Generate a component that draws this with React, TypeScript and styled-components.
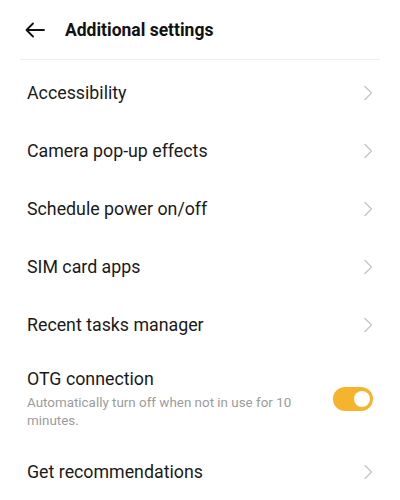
import styled, { createGlobalStyle } from "styled-components";

const GlobalStyle = createGlobalStyle`
    html, body {
        margin: 0;
        padding: 0;
        background: #ffffff;
        font-family: Roboto, "Noto Sans", Arial, sans-serif;
        -webkit-font-smoothing: antialiased;
    }
`;

type Item = { label: string };

const items: Item[] = [
    { label: "Accessibility" },
    { label: "Camera pop-up effects" },
    { label: "Schedule power on/off" },
    { label: "SIM card apps" },
    { label: "Recent tasks manager" },
];

const Chevron = () => (
    <ChevronIcon width="10" height="16" viewBox="0 0 10 16">
        <path d="M2 1.5 L8.5 8 L2 14.5" fill="none" stroke="#c6c6c6" strokeWidth="1.4" strokeLinecap="round" strokeLinejoin="round" />
    </ChevronIcon>
);

const App: React.FC = () => {
    return (
        <>
            <GlobalStyle />
            <Page>
                <Header>
                    <BackButton aria-label="Back">
                        <svg width="22" height="16" viewBox="0 0 22 16">
                            <path d="M20 8 H2.5 M9 1.5 L2.5 8 L9 14.5" fill="none" stroke="#111" strokeWidth="1.8" strokeLinecap="round" strokeLinejoin="round" />
                        </svg>
                    </BackButton>
                    <Title>Additional settings</Title>
                </Header>
                <Divider />
                <List>
                    {items.map((item) => (
                        <Row key={item.label}>
                            <RowLabel>{item.label}</RowLabel>
                            <Chevron />
                        </Row>
                    ))}
                    <SwitchRow>
                        <RowText>
                            <RowLabel>OTG connection</RowLabel>
                            <RowHint>Automatically turn off when not in use for 10 minutes.</RowHint>
                        </RowText>
                        <Toggle $on />
                    </SwitchRow>
                    <Row>
                        <RowLabel>Get recommendations</RowLabel>
                        <Chevron />
                    </Row>
                </List>
            </Page>
        </>
    );
};

export default App;

const Page = styled.div`
    width: 400px;
    height: 500px;
    overflow: hidden;
    background: #ffffff;
`;

const Header = styled.div`
    display: flex;
    align-items: center;
    height: 58px;
    padding: 0 0 0 24px;
    box-sizing: border-box;
    margin-top: 1px;
`;

const BackButton = styled.div`
    display: flex;
    align-items: center;
    width: 41px;
    svg {
        display: block;
    }
`;

const Title = styled.h1`
    margin: 0;
    font-size: 17.5px;
    font-weight: 700;
    color: #111111;
`;

const Divider = styled.div`
    height: 1px;
    margin: 0 20px;
    background: #eeeeee;
`;

const List = styled.div`
    display: flex;
    flex-direction: column;
    padding-top: 4px;
`;

const Row = styled.div`
    display: flex;
    align-items: center;
    justify-content: space-between;
    height: 58px;
    padding: 0 27px 0 27px;
`;

const SwitchRow = styled(Row)`
    height: auto;
    padding-top: 14px;
    padding-bottom: 13px;
`;

const RowText = styled.div`
    display: flex;
    flex-direction: column;
    max-width: 280px;
`;

const RowLabel = styled.span`
    font-size: 17.8px;
    line-height: 22px;
    color: #1a1a1a;
`;

const RowHint = styled.span`
    margin-top: 4px;
    font-size: 13.4px;
    line-height: 18px;
    color: #9c9c9c;
`;

const ChevronIcon = styled.svg`
    display: block;
    flex-shrink: 0;
`;

const Toggle = styled.div<{ $on?: boolean }>`
    position: relative;
    flex-shrink: 0;
    width: 40px;
    height: 24px;
    border-radius: 12px;
    background: ${(p) => (p.$on ? "#f6b42c" : "#d8d8d8")};

    &::after {
        content: "";
        position: absolute;
        top: 4px;
        left: ${(p) => (p.$on ? "21px" : "3px")};
        width: 16px;
        height: 16px;
        border-radius: 50%;
        background: #ffffff;
    }
`;
